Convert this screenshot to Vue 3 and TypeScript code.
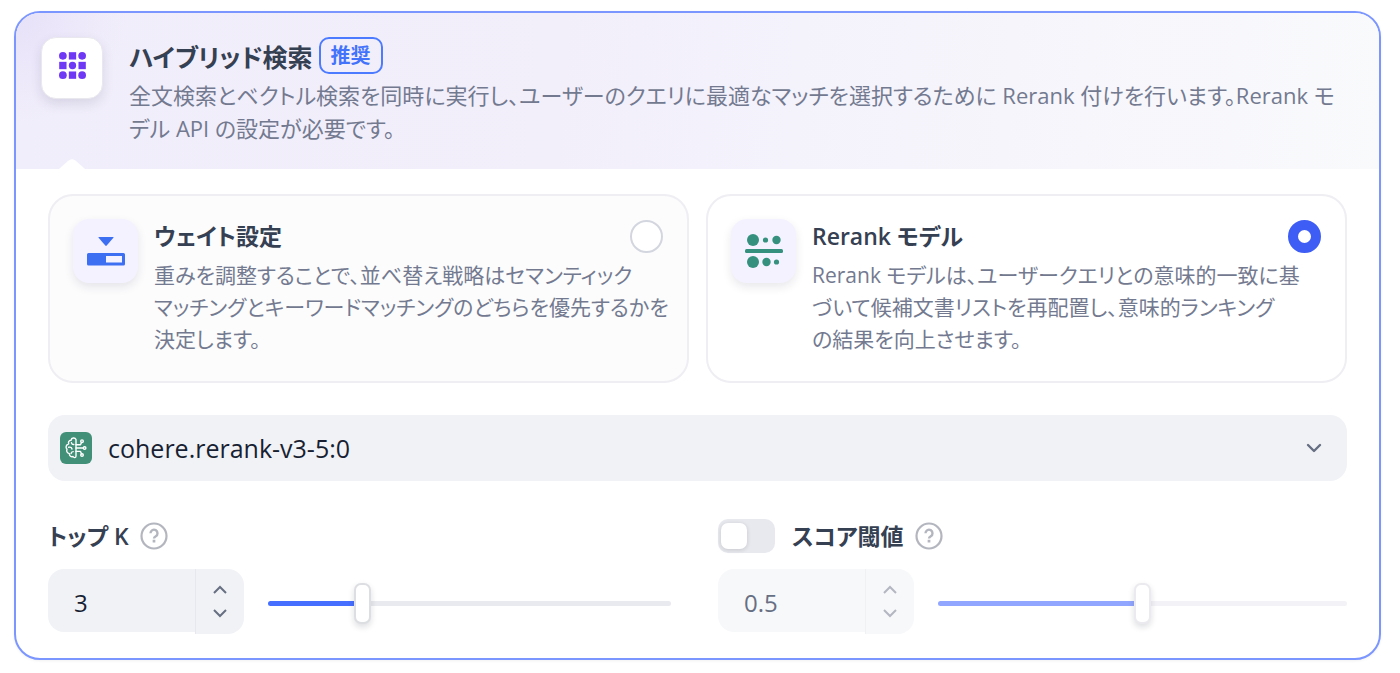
<script setup lang="ts">
import { computed, ref } from 'vue'

const strategy = ref<'weight' | 'rerank'>('rerank')
const model = ref('cohere.rerank-v3-5:0')
const topK = ref(3)
const threshold = ref(0.5)
const thresholdOn = ref(false)

const topKFill = computed(() => `${((topK.value - 1) / 9) * 100}%`)
const thresholdFill = computed(() => `${threshold.value * 100}%`)

function stepTopK(delta: number) {
  topK.value = Math.min(10, Math.max(1, topK.value + delta))
}
function stepThreshold(delta: number) {
  threshold.value = Math.min(1, Math.max(0, Math.round((threshold.value + delta) * 100) / 100))
}
</script>

<template>
  <main class="page">
    <section class="panel">
      <header class="head">
        <span class="head-icon">
          <svg width="27" height="27" viewBox="0 0 28 28" fill="#6f38f5" aria-hidden="true">
            <circle cx="4" cy="4" r="4" /><rect x="10.200" y="0.200" width="7.600" height="7.600" /><circle cx="24" cy="4" r="4" />
            <rect x="0.200" y="10.200" width="7.600" height="7.600" /><circle cx="14" cy="14" r="3.800" /><rect x="20.200" y="10.200" width="7.600" height="7.600" />
            <circle cx="4" cy="24" r="4" /><rect x="10.200" y="20.200" width="7.600" height="7.600" /><circle cx="24" cy="24" r="4" />
          </svg>
        </span>
        <div class="head-text">
          <div class="head-title">
            <h2>ハイブリッド検索</h2>
            <span class="badge">推奨</span>
          </div>
          <p class="desc">全文検索とベクトル検索を同時に実行し、ユーザーのクエリに最適なマッチを選択するために Rerank 付けを行います。Rerank モデル API の設定が必要です。</p>
        </div>
        <svg class="notch" width="26" height="10" viewBox="0 0 26 10" aria-hidden="true">
          <path d="M0 10 L9 2 Q13 -1.5 17 2 L26 10 Z" fill="#fff" />
        </svg>
      </header>

      <div class="body">
        <div class="options">
          <label class="option muted">
            <span class="option-icon">
              <svg width="38" height="30" viewBox="0 0 38 30" aria-hidden="true">
                <path d="M12 1h14q1 0 .4.8L19.700 9.600q-.7.8-1.400 0L11.600 1.800Q11 1 12 1z" fill="#3d6ff2" />
                <path fill-rule="evenodd" d="M1.500 17h35q1.500 0 1.500 1.500v9.500q0 1.500-1.500 1.500h-35Q0 29.500 0 28v-9.500Q0 17 1.500 17zM19 20v6.500h16V20z" fill="#3d6ff2" />
              </svg>
            </span>
            <span class="option-text">
              <span class="option-title">ウェイト設定</span>
              <span class="desc">重みを調整することで、並べ替え戦略はセマンティック<br />マッチングとキーワードマッチングのどちらを優先するかを<br />決定します。</span>
            </span>
            <input v-model="strategy" class="radio" type="radio" name="strategy" value="weight" />
          </label>
          <label class="option">
            <span class="option-icon">
              <svg width="38" height="36" viewBox="0 0 38 36" fill="#35917d" aria-hidden="true">
                <circle cx="8" cy="7" r="6" /><circle cx="20.500" cy="7" r="2.600" /><circle cx="31.500" cy="7" r="4.200" />
                <rect x="0" y="16" width="38" height="4" rx="1.500" />
                <circle cx="8" cy="29" r="6" /><circle cx="21.500" cy="29" r="4.200" /><circle cx="31.500" cy="29" r="2.600" />
              </svg>
            </span>
            <span class="option-text">
              <span class="option-title">Rerank モデル</span>
              <span class="desc">Rerank モデルは、ユーザークエリとの意味的一致に基<br />づいて候補文書リストを再配置し、意味的ランキング<br />の結果を向上させます。</span>
            </span>
            <input v-model="strategy" class="radio" type="radio" name="strategy" value="rerank" />
          </label>
        </div>

        <label class="model">
          <svg width="32" height="32" viewBox="0 0 32 32" aria-hidden="true">
            <rect width="32" height="32" rx="6" fill="#429078" />
            <g fill="none" stroke="#fff" stroke-width="1.400" stroke-linecap="round" stroke-linejoin="round">
              <path d="M16 7.500c-1-2.200-4.500-2-5 .8-2.200 0-3 2-2.300 3.600-2.700.9-3.400 3.700-1.700 5.300-.9 2 .2 4 2.300 4.400 0 2.500 2 3.600 3.700 2.900 1 1.800 3 1.300 3-.5z" />
              <path d="M11.500 10.800c.3 1.200 1.200 1.800 2.300 1.700M8.700 15.300c1.600-.4 2.900.3 3.300 1.700M13.200 19.600c-1.200 0-2 .7-2.100 1.900" />
              <path d="M16 12.800h4.500l1-2.300M16 16h7.200M16 19.400h4.500l1 2.400" />
              <circle cx="22" cy="9.200" r="1.300" /><circle cx="24.600" cy="16" r="1.300" /><circle cx="22" cy="23" r="1.300" />
            </g>
          </svg>
          <select v-model="model" aria-label="Rerank モデル">
            <option>cohere.rerank-v3-5:0</option>
          </select>
          <svg width="16" height="10" viewBox="0 0 16 10" aria-hidden="true">
            <path d="M2 2l6 6 6-6" fill="none" stroke="#676f83" stroke-width="2.400" stroke-linecap="round" stroke-linejoin="round" />
          </svg>
        </label>

        <div class="params">
          <div class="param">
            <div class="param-head">
              <label for="top-k">トップ K</label>
              <svg class="help" width="28" height="28" viewBox="0 0 28 28" fill="none" stroke="#b4b6bf" aria-hidden="true">
                <circle cx="14" cy="14" r="12.500" stroke-width="2.200" />
                <path d="M10.500 11.200a3.500 3.500 0 1 1 5.300 3c-1.200.7-1.800 1.200-1.800 2.300" stroke-width="2.400" />
                <path d="M14 17.800v2.700" stroke-width="2.700" />
              </svg>
            </div>
            <div class="param-row">
              <div class="number">
                <input id="top-k" v-model.number="topK" type="text" inputmode="numeric" />
                <div class="steps">
                  <button type="button" aria-label="増やす" @click="stepTopK(1)">
                    <svg width="14" height="9" viewBox="0 0 14 9"><path d="M1 8l6-6 6 6" /></svg>
                  </button>
                  <button type="button" aria-label="減らす" @click="stepTopK(-1)">
                    <svg width="14" height="9" viewBox="0 0 14 9"><path d="M1 1l6 6 6-6" /></svg>
                  </button>
                </div>
              </div>
              <input v-model.number="topK" class="slider" type="range" min="1" max="10" aria-label="トップ K" :style="{ '--fill': topKFill }" />
            </div>
          </div>

          <div class="param" :class="{ off: !thresholdOn }">
            <div class="param-head">
              <input id="threshold-on" v-model="thresholdOn" class="switch" type="checkbox" role="switch" />
              <label for="threshold-on">スコア閾値</label>
              <svg class="help" width="28" height="28" viewBox="0 0 28 28" fill="none" stroke="#b4b6bf" aria-hidden="true">
                <circle cx="14" cy="14" r="12.500" stroke-width="2.200" />
                <path d="M10.500 11.200a3.500 3.500 0 1 1 5.300 3c-1.200.7-1.800 1.200-1.800 2.300" stroke-width="2.400" />
                <path d="M14 17.800v2.700" stroke-width="2.700" />
              </svg>
            </div>
            <div class="param-row">
              <div class="number">
                <input v-model.number="threshold" type="text" inputmode="decimal" aria-label="スコア閾値" :disabled="!thresholdOn" />
                <div class="steps">
                  <button type="button" aria-label="増やす" :disabled="!thresholdOn" @click="stepThreshold(0.01)">
                    <svg width="14" height="9" viewBox="0 0 14 9"><path d="M1 8l6-6 6 6" /></svg>
                  </button>
                  <button type="button" aria-label="減らす" :disabled="!thresholdOn" @click="stepThreshold(-0.01)">
                    <svg width="14" height="9" viewBox="0 0 14 9"><path d="M1 1l6 6 6-6" /></svg>
                  </button>
                </div>
              </div>
              <input v-model.number="threshold" class="slider" type="range" min="0" max="1" step="0.01" aria-label="スコア閾値" :disabled="!thresholdOn" :style="{ '--fill': thresholdFill }" />
            </div>
          </div>
        </div>
      </div>
    </section>
  </main>
</template>

<style>
body {
  background: #fff;
}
</style>

<style scoped>
.page,
.page * {
  box-sizing: border-box;
}
.page {
  padding: 11px 19px 12px 14px;
  font-family: 'Open Sans', 'Noto Sans CJK JP', sans-serif;
  font-feature-settings: 'palt';
  font-size: 24px;
  line-height: 32px;
  color: #354052;
}
input,
select,
button {
  font: inherit;
  font-feature-settings: inherit;
  margin: 0;
  border: 0;
}
.panel {
  overflow: hidden;
  border: 2px solid #7c96ff;
  border-radius: 26px;
  background: #fff;
  box-shadow: 0 1px 3px rgba(16, 24, 40, 0.06);
}
.head {
  position: relative;
  display: flex;
  gap: 26px;
  padding: 24px 40px 24px 25px;
  background:
    radial-gradient(circle at 0 0, rgba(222, 212, 246, 0.5), rgba(222, 212, 246, 0) 110px),
    linear-gradient(95deg, #f1eefb 0%, #f2effb 40%, #f9fafc 100%);
}
.head-icon {
  display: flex;
  flex: none;
  align-items: center;
  justify-content: center;
  width: 62px;
  height: 62px;
  border: 1px solid #e9e8ee;
  border-radius: 15px;
  background: #fff;
  box-shadow: 0 5px 12px rgba(30, 30, 70, 0.12);
  padding-bottom: 6px;
}
.head-title {
  display: flex;
  align-items: flex-start;
  gap: 6px;
  height: 42px;
}
h2,
.option-title {
  margin: 0;
  font-size: 25px;
  font-weight: 600;
  line-height: 40px;
}
.badge {
  padding: 0 10px;
  border: 2px solid #4d7bff;
  border-radius: 10px;
  color: #4473fb;
  font-size: 20px;
  font-weight: 600;
  line-height: 33px;
}
.desc {
  display: block;
  margin: 0;
  color: #737a90;
  font-size: 22px;
  line-height: 33px;
}
.notch {
  position: absolute;
  bottom: 0;
  left: 43px;
}
.body {
  padding: 25px 32px 24px;
}
.options {
  display: grid;
  grid-template-columns: 1fr 1fr;
  gap: 17px;
}
.option {
  position: relative;
  display: flex;
  gap: 16px;
  padding: 23px 8px 26px 23px;
  border: 2px solid #eeeef3;
  border-radius: 25px;
  background: #fff;
}
.muted {
  background: #fcfcfd;
}
.option-icon {
  display: flex;
  flex: none;
  align-items: center;
  justify-content: center;
  width: 65px;
  height: 64px;
  border-radius: 16px;
  background: #f4f2ff;
  box-shadow: 0 4px 10px rgba(30, 30, 70, 0.1);
}
.option-text {
  flex: 1;
}
.option-title {
  display: block;
  font-size: 23px;
  line-height: 34px;
}
.option .desc {
  margin-top: 6px;
  font-size: 21px;
  line-height: 32px;
}
.radio {
  position: absolute;
  top: 24px;
  right: 24px;
  width: 33px;
  height: 33px;
  appearance: none;
  border: 2px solid #d3d6df;
  border-radius: 50%;
  background: #fff;
}
.radio:checked {
  border: 10px solid #3e5df5;
}
.model {
  display: flex;
  align-items: center;
  gap: 16px;
  height: 66px;
  margin-top: 32px;
  padding: 0 25px 0 12px;
  border-radius: 17px;
  background: #f1f2f6;
}
.model select {
  flex: 1;
  padding: 0;
  appearance: none;
  background: none;
  color: #181f32;
  font-size: 25px;
}
.params {
  display: grid;
  grid-template-columns: 623fr 629fr;
  gap: 47px;
  margin-top: 37px;
}
.param-head {
  display: flex;
  align-items: center;
  height: 36px;
  font-size: 23px;
  font-weight: 600;
}
.help {
  margin-left: 11px;
}
.switch {
  display: flex;
  align-items: center;
  width: 57px;
  height: 34px;
  margin-right: 17px;
  padding: 3px;
  appearance: none;
  border-radius: 10px;
  background: #e8e9ee;
}
.switch::before {
  content: '';
  width: 26px;
  height: 26px;
  border-radius: 7px;
  background: #fff;
  box-shadow: 0 1px 4px rgba(16, 24, 40, 0.16);
}
.switch:checked {
  justify-content: flex-end;
  background: #466eff;
}
.param-row {
  display: flex;
  align-items: center;
  gap: 24px;
  margin-top: 15px;
}
.number {
  display: flex;
  align-items: flex-start;
  width: 196px;
}
.number > input {
  flex: 1;
  min-width: 0;
  height: 63px;
  padding: 4px 26px 0;
  border-radius: 16px 0 0 16px;
  background: #f1f2f6;
  color: #181f32;
}
.steps {
  display: flex;
  flex-direction: column;
  width: 49px;
  height: 65px;
  padding: 8px 0;
  border-left: 1px solid #e6e8ed;
  border-radius: 0 16px 16px 0;
  background: #f1f2f6;
}
.steps button {
  display: flex;
  flex: 1;
  align-items: center;
  justify-content: center;
  padding: 0;
  background: none;
}
.steps path {
  fill: none;
  stroke: #676f83;
  stroke-width: 2;
}
.slider {
  --thumb-line: #dddee2;
  --track: #e9eaef;
  --bar: #466eff;
  flex: 1;
  min-width: 0;
  height: 5px;
  margin-top: 4px;
  appearance: none;
  background: linear-gradient(var(--bar), var(--bar)) 0 / var(--fill) 100% no-repeat, var(--track);
  border-radius: 3px;
}
.slider::-webkit-slider-thumb {
  width: 17px;
  height: 41px;
  appearance: none;
  border: 2px solid var(--thumb-line);
  border-radius: 7px;
  background: #fff;
  box-shadow: 0 3px 6px rgba(16, 24, 40, 0.14);
}
.off .number > input {
  background: #f7f8fa;
  color: #676f83;
}
.off .steps {
  border-left-color: #f0f1f4;
  background: #f7f8fa;
}
.off .steps path {
  stroke: #b4b7c1;
}
.off .slider {
  --thumb-line: #ebebef;
  --track: #f3f3f7;
  --bar: #91a6ff;
}
</style>
